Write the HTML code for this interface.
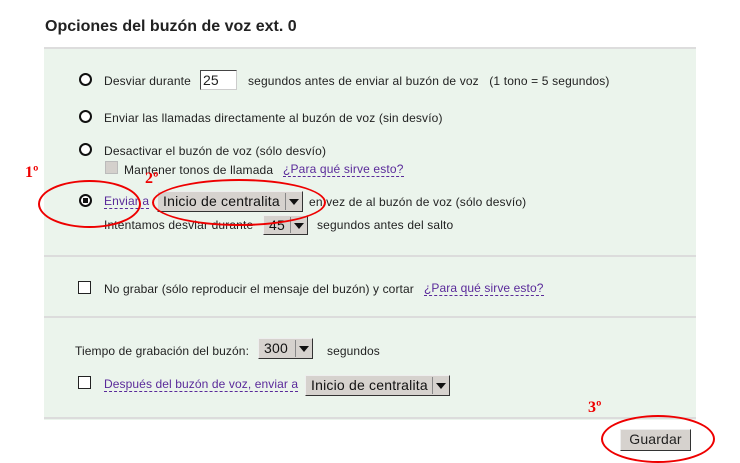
<!DOCTYPE html>
<html><head><meta charset="utf-8"><style>
body{margin:0;width:740px;height:461px;background:#fff;position:relative;overflow:hidden;font-family:"Liberation Sans",sans-serif;font-size:12px;letter-spacing:0.15px;color:#222}
.a{position:absolute;white-space:nowrap;line-height:14px}
.panel{position:absolute;left:44px;top:47px;width:652px;height:371px;background:#ebf4ec;border-top:2px solid #ddd}
.sep{position:absolute;left:44px;width:652px;height:2px;background:#dcdcdc}
.radio{position:absolute;width:9px;height:9px;border:2px solid #111;border-radius:50%;background:#fff}
.cb{position:absolute;width:11px;height:11px;border:1px solid #222;background:#fff}
.lk{color:#5a2a9a;border-bottom:1px dashed #5a2a9a;line-height:13px}
.sel{position:absolute;background:#d6d2ce;border:1px solid #eee;border-right-color:#333;border-bottom-color:#333;box-sizing:border-box;font-size:14px;letter-spacing:0.2px;line-height:19px;padding-left:5px;color:#111}
.sel i{position:absolute;right:1px;top:1px;width:15px;bottom:1px;border-left:1px solid #888;font-style:normal}
.sel i:after{content:"";position:absolute;left:3px;top:6px;border:5px solid transparent;border-top:6px solid #111;border-bottom:0}
.red{position:absolute;color:#e00;font-family:"Liberation Serif",serif;font-size:16px;font-weight:bold}
.ell{position:absolute;border:2px solid #e00;border-radius:50%}
.lo{font-size:12px;letter-spacing:0.1px}
</style></head><body>
<div class="a" style="left:45px;top:18px;font-size:16px;letter-spacing:0;font-weight:bold;color:#222;line-height:18px">Opciones del buzón de voz ext. 0</div>
<div class="panel"></div>
<div class="sep" style="top:255px"></div>
<div class="sep" style="top:316px"></div>
<div class="sep" style="top:417px"></div>

<div class="radio" style="left:79px;top:73px"></div>
<div class="a" style="left:104px;top:74px">Desviar durante</div>
<div class="a" style="left:200px;top:70px;width:37px;height:20px;box-sizing:border-box;border:1px solid #ccc;border-top-color:#444;border-left-color:#444;background:#fff;font-size:14px;line-height:18px;padding-left:2px">25</div>
<div class="a" style="left:248px;top:74px">segundos antes de enviar al buzón de voz &nbsp;&nbsp;(1 tono = 5 segundos)</div>

<div class="radio" style="left:79px;top:110px"></div>
<div class="a" style="left:104px;top:111px">Enviar las llamadas directamente al buzón de voz (sin desvío)</div>

<div class="radio" style="left:79px;top:143px"></div>
<div class="a" style="left:104px;top:144px">Desactivar el buzón de voz (sólo desvío)</div>
<div class="cb" style="left:105px;top:161px;background:#d4d0cc;border-color:#bbb"></div>
<div class="a" style="left:124px;top:163px">Mantener tonos de llamada</div>
<div class="a lk" style="left:283px;top:163px">¿Para qué sirve esto?</div>

<div class="radio" style="left:79px;top:194px"></div>
<div style="position:absolute;left:83px;top:198px;width:5px;height:5px;background:#111"></div>
<div class="a lk" style="left:104px;top:195px">Enviar a</div>
<div class="sel a" style="left:157px;top:191px;width:146px;height:21px">Inicio de centralita<i></i></div>
<div class="a" style="left:309px;top:195px">en vez de al buzón de voz (sólo desvío)</div>
<div class="a" style="left:104px;top:218px">Intentamos desviar durante</div>
<div class="sel a" style="left:263px;top:215px;width:45px;height:20px">45<i></i></div>
<div class="a" style="left:317px;top:218px">segundos antes del salto</div>

<div class="cb" style="left:78px;top:281px"></div>
<div class="a lo" style="left:104px;top:282px">No grabar (sólo reproducir el mensaje del buzón) y cortar</div>
<div class="a lk lo" style="left:424px;top:282px">¿Para qué sirve esto?</div>

<div class="a lo" style="left:75px;top:344px">Tiempo de grabación del buzón:</div>
<div class="sel a" style="left:258px;top:338px;width:55px;height:21px">300<i></i></div>
<div class="a lo" style="left:327px;top:344px">segundos</div>

<div class="cb" style="left:78px;top:376px"></div>
<div class="a lk lo" style="left:104px;top:378px">Después del buzón de voz, enviar a</div>
<div class="sel a" style="left:305px;top:375px;width:145px;height:21px">Inicio de centralita<i></i></div>

<div class="a" style="left:620px;top:429px;width:71px;height:22px;box-sizing:border-box;background:#d6d2ce;border:1px solid #eee;border-right-color:#333;border-bottom-color:#333;text-align:center;line-height:19px;font-size:14px">Guardar</div>

<div class="red" style="left:25px;top:164px">1º</div>
<div class="red" style="left:145px;top:170px">2º</div>
<div class="red" style="left:588px;top:399px">3º</div>
<div class="ell" style="left:38px;top:180px;width:99px;height:44px"></div>
<div class="ell" style="left:152px;top:179px;width:170px;height:43px"></div>
<div class="ell" style="left:601px;top:415px;width:110px;height:44px"></div>
</body></html>
